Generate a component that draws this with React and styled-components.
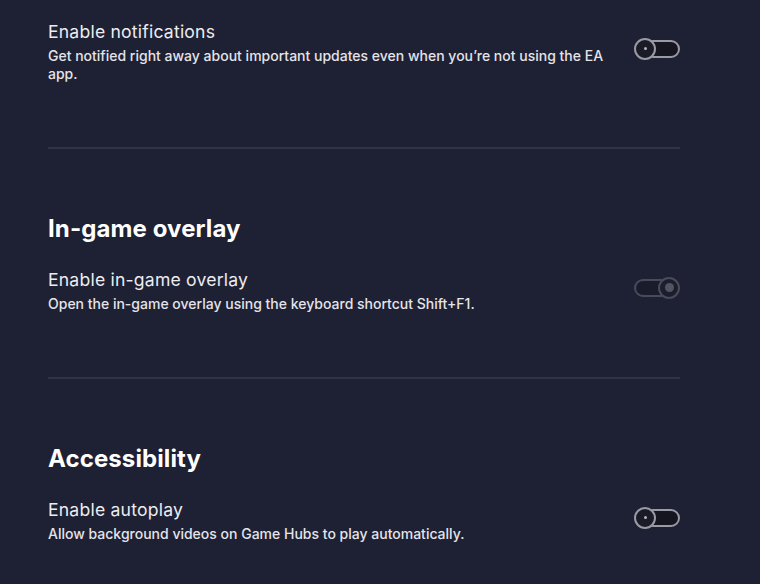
import React from 'react';
import styled, { createGlobalStyle } from 'styled-components';

const GlobalStyle = createGlobalStyle`
    html, body {
        margin: 0;
        background: #1e2033;
    }
    body {
        font-family: Inter, "Noto Sans", sans-serif;
        color: #ececf0;
    }
`;

const Page = styled.main`
    width: 632px;
    padding: 20px 0 0 48px;
`;

const Section = styled.section`
    padding-top: ${(p) => (p.first ? '0' : '64px')};
    padding-bottom: 64px;
    border-bottom: ${(p) => (p.last ? 'none' : '2px solid #30324a')};
`;

const Heading = styled.h2`
    margin: 0 0 23px;
    font-size: 24px;
    line-height: 32px;
    font-weight: 700;
    letter-spacing: 0.1px;
    color: #ffffff;
`;

const Row = styled.div`
    display: flex;
    align-items: center;
    gap: 22px;
`;

const Text = styled.div`
    flex: 1;
`;

const Label = styled.div`
    font-size: 17.6px;
    line-height: 24px;
    font-weight: 400;
    letter-spacing: 0.2px;
    margin-bottom: 3px;
`;

const Desc = styled.div`
    font-size: 14px;
    line-height: 18px;
    font-weight: 500;
    color: #e4e4ea;
`;

const Toggle = styled.div`
    position: relative;
    width: 46px;
    height: 22px;
    flex-shrink: 0;
    margin-bottom: 6px;
    opacity: ${(p) => (p.on ? 0.35 : 1)};
`;

const Track = styled.div`
    position: absolute;
    left: 10px;
    right: 0;
    top: 2px;
    bottom: 2px;
    border: 2px solid #9a9aa4;
    border-radius: 10px;
    background: #15161f;
    box-sizing: border-box;
    ${(p) => p.on && 'left: 0; right: 10px;'}
`;

const Knob = styled.div`
    position: absolute;
    top: 0;
    ${(p) => (p.on ? 'right: 0;' : 'left: 0;')}
    width: 22px;
    height: 22px;
    box-sizing: border-box;
    border: 2px solid #9a9aa4;
    border-radius: 50%;
    background: #1a1b27;
    display: flex;
    align-items: center;
    justify-content: center;
    &::after {
        content: '';
        width: ${(p) => (p.on ? '9px' : '3px')};
        height: ${(p) => (p.on ? '9px' : '3px')};
        border-radius: 50%;
        background: #b4b4bc;
    }
`;

function Switch({ on }) {
    return (
        <Toggle on={on ? 1 : 0}>
            <Track on={on ? 1 : 0} />
            <Knob on={on ? 1 : 0} />
        </Toggle>
    );
}

function SettingRow({ label, desc, on }) {
    return (
        <Row>
            <Text>
                <Label>{label}</Label>
                <Desc>{desc}</Desc>
            </Text>
            <Switch on={on} />
        </Row>
    );
}

export default function App() {
    return (
        <>
            <GlobalStyle />
            <Page>
                <Section first>
                    <SettingRow
                        label="Enable notifications"
                        desc="Get notified right away about important updates even when you’re not using the EA app."
                    />
                </Section>
                <Section>
                    <Heading>In-game overlay</Heading>
                    <SettingRow
                        label="Enable in-game overlay"
                        desc="Open the in-game overlay using the keyboard shortcut Shift+F1."
                        on
                    />
                </Section>
                <Section last>
                    <Heading>Accessibility</Heading>
                    <SettingRow
                        label="Enable autoplay"
                        desc="Allow background videos on Game Hubs to play automatically."
                    />
                </Section>
            </Page>
        </>
    );
}
